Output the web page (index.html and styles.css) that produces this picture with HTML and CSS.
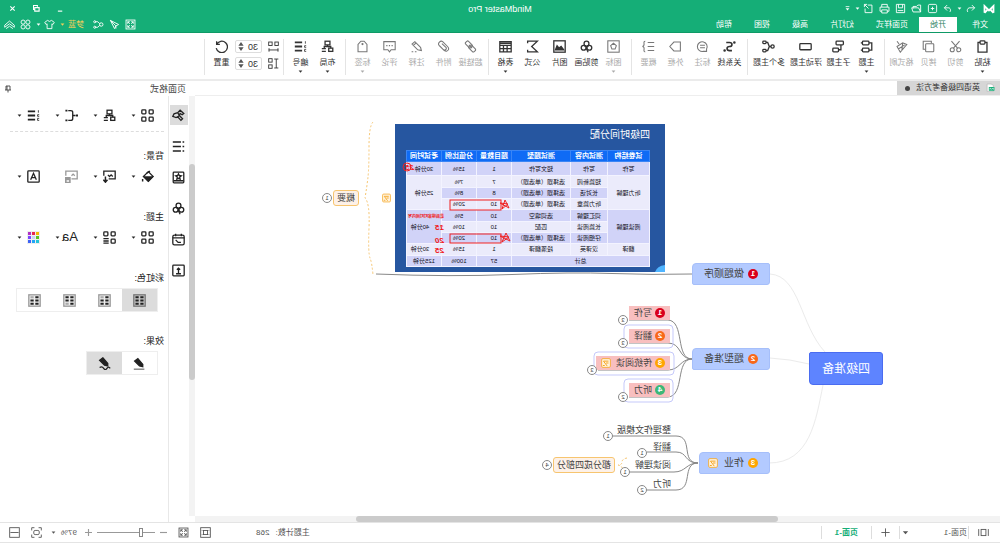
FILE: index.html
```html
<!DOCTYPE html>
<html lang="zh-CN">
<head>
<meta charset="utf-8">
<title>MindMaster Pro</title>
<link rel="stylesheet" href="styles.css">
</head>
<body>
<svg class="sprite" aria-hidden="true">
  <symbol id="i-caret" viewBox="0 0 8 8"><path d="M1 2.500h6L4 6z" fill="currentColor" stroke="none"/></symbol>
  <symbol id="i-undo" viewBox="0 0 16 16"><path d="M6 3 2 7l4 4M2 7h8a4 4 0 0 1 2 6"/></symbol>
  <symbol id="i-redo" viewBox="0 0 16 16"><path d="m10 3 4 4-4 4M14 7H7a4 4 0 0 0-1 6"/></symbol>
  <symbol id="i-new" viewBox="0 0 16 16"><rect x="2" y="2" width="12" height="12" rx="2"/><path d="M8 5.500v5M5.500 8h5"/></symbol>
  <symbol id="i-open" viewBox="0 0 16 16"><path d="M2 13V3h4l2 2h5v3M2 13h11l2-6H5z"/></symbol>
  <symbol id="i-save" viewBox="0 0 16 16"><path d="M2 2h12v12H2zM5 2v5h6V2M4 11h8"/></symbol>
  <symbol id="i-print" viewBox="0 0 16 16"><path d="M4 6V2h8v4M4 12H1.500V6h13v6H12M4 10h8v4.500H4z"/></symbol>
  <symbol id="i-export" viewBox="0 0 16 16"><path d="M9 3H3v11h10V8M8 8l6-6M10 2h4v4"/></symbol>
  <symbol id="i-full" viewBox="0 0 16 16"><rect x="1.500" y="1.500" width="13" height="13"/><path d="M4 7V4h3M9 4h3v3M12 9v3H9M7 12H4V9M4 4l3 3M12 4 9 7M12 12 9 9M4 12l3-3"/></symbol>
  <symbol id="i-send" viewBox="0 0 16 16"><path d="M14 2 2 8l4 2 2 4zM14 2 6 10v4"/></symbol>
  <symbol id="i-share" viewBox="0 0 16 16"><circle cx="4" cy="8" r="2.500"/><path d="m6 7 3-3h4M6 9l3 3h4"/><circle cx="13.500" cy="4" r="1.500"/><circle cx="13.500" cy="12" r="1.500"/></symbol>
  <symbol id="i-shirt" viewBox="0 0 16 16"><path d="M5 2 1 5l2 3 1.500-1v7h7V7L13 8l2-3-4-3q-3 3-6 0z"/></symbol>
  <symbol id="i-clover" viewBox="0 0 16 16"><circle cx="4.500" cy="4.500" r="3"/><circle cx="11.500" cy="4.500" r="3"/><circle cx="4.500" cy="11.500" r="3"/><circle cx="11.500" cy="11.500" r="3"/></symbol>
  <symbol id="i-up" viewBox="0 0 16 16"><path d="m1 9 7-6 7 6v3L8 7l-7 5zM3 14l5-3.500 5 3.500"/></symbol>
  <symbol id="i-paste" viewBox="0 0 16 16"><path d="M5 3H2.500v12h11V3H11"/><rect x="5" y="1" width="6" height="4" rx="1"/></symbol>
  <symbol id="i-cut" viewBox="0 0 16 16"><circle cx="4" cy="12" r="2.500"/><circle cx="12" cy="12" r="2.500"/><path d="M5.500 10 13 1.500M10.500 10 3 1.500"/></symbol>
  <symbol id="i-copy" viewBox="0 0 16 16"><path d="M4.500 4V1.500h10v10H12"/><rect x="1.500" y="4.500" width="10" height="10" rx="1"/></symbol>
  <symbol id="i-format" viewBox="0 0 16 16"><path d="M13.500 1.500 11 5M1.500 5.500l5-2 7 4.500-4 7zM4 6l8 5M6.500 3.500l1 9"/></symbol>
  <symbol id="i-topic" viewBox="0 0 16 16"><rect x="5" y="1.500" width="8" height="4.500" rx="1"/><rect x="5" y="10" width="8" height="4.500" rx="1"/><path d="M5 3.500H1.500v9H5M13 3.500h2M13 12.500h2"/></symbol>
  <symbol id="i-sub" viewBox="0 0 16 16"><rect x="2" y="1.500" width="9" height="4.500" rx="1"/><rect x="8" y="10" width="7" height="4.500" rx="1"/><path d="M5 6v6h3"/></symbol>
  <symbol id="i-float" viewBox="0 0 16 16"><rect x="1" y="4.500" width="14" height="7.500" rx="1"/></symbol>
  <symbol id="i-multi" viewBox="0 0 16 16"><circle cx="3" cy="8" r="2"/><path d="M5 8h2l2-5h2M7 8l2 5h2"/><rect x="11" y="1.500" width="4" height="3" rx="1"/><rect x="11" y="11.500" width="4" height="3" rx="1"/></symbol>
  <symbol id="i-relation" viewBox="0 0 16 16"><path d="M12 3H8q-3 0-3 2.500T8 8q3 0 3 2.500T8 13H5" stroke-width="2"/><circle cx="2" cy="3" r=".8"/><circle cx="14" cy="13" r=".8"/></symbol>
  <symbol id="i-callout" viewBox="0 0 16 16"><path d="M3 14v-3a6 6 0 1 1 4 3zM5 6.500h6M5 9.500h6"/></symbol>
  <symbol id="i-frame" viewBox="0 0 16 16"><path d="M2 2.500h8l5 5.500-5 5.500H2z"/></symbol>
  <symbol id="i-summary" viewBox="0 0 16 16"><path d="M1 3h8M1 8h8M1 13h8M12 1.500q2 0 1.500 3T15.500 8q-2.500 0-2 3.500t-1.500 3"/></symbol>
  <symbol id="i-mark" viewBox="0 0 16 16"><rect x="1" y="1" width="14" height="14"/><path d="m8 4 3.500 3-1.500 4H6L4.500 7z"/></symbol>
  <symbol id="i-clip" viewBox="0 0 16 16"><circle cx="8" cy="4.500" r="3"/><circle cx="4.500" cy="9.500" r="3"/><circle cx="11.500" cy="9.500" r="3"/><path d="M8 8v3l-2 4M6 7l2 2 2-2"/></symbol>
  <symbol id="i-image" viewBox="0 0 16 16"><rect x="1" y="1" width="14" height="14"/><path d="m3 12 3-4 2.500 2L11 7l2 5z" fill="currentColor"/></symbol>
  <symbol id="i-sigma" viewBox="0 0 16 16"><path d="M14 4V1.500H2L9 8l-7 6.500h12V12"/></symbol>
  <symbol id="i-table" viewBox="0 0 16 16"><path d="M1 2h14v12.500H1zM1 4h14M1 6.500h14M1 10.500h14M6 6.500v8M10.500 6.500v8"/></symbol>
  <symbol id="i-link" viewBox="0 0 16 16"><rect x="1.500" y="8" width="9" height="5" rx="1.500" transform="rotate(-45 6 10.500)"/><rect x="5.500" y="3" width="9" height="5" rx="1.500" transform="rotate(-45 10 5.500)"/><path d="m6 10 4-4"/></symbol>
  <symbol id="i-attach" viewBox="0 0 16 16"><path d="M13 7 7 13q-3 2-5-1-1-2 1-4l6-6q2-1.500 4 .5 2 2 .5 4L8 12q-2 1-3-.5T5 9l5-4.500"/></symbol>
  <symbol id="i-note" viewBox="0 0 16 16"><path d="M3 9 10 2l3.500 3-7 7-4.500 1zM8.500 3.500 12 7M8 14.500h2M12 14.500h2"/></symbol>
  <symbol id="i-comment" viewBox="0 0 16 16"><path d="M1 2h14v10h-5l-2 2.500L6 12H1z"/><path d="M4 7h1.500M7.300 7h1.500M10.500 7H12" stroke-width="1.600"/></symbol>
  <symbol id="i-tag" viewBox="0 0 16 16"><path d="M2.500 14.500v-9l3.500-4h4l3.500 4v9z"/><circle cx="8" cy="5" r=".7"/></symbol>
  <symbol id="i-layout" viewBox="0 0 16 16"><rect x="5" y="1.500" width="6" height="4.500"/><rect x="1.500" y="10" width="5" height="4"/><path d="M8 6v2M4 10V8h8v2M10 10.500h5M10 14h5"/></symbol>
  <symbol id="i-number" viewBox="0 0 16 16"><path d="M6 3h9M6 8h9M6 13h9" stroke-width="2.200"/><path d="M2 1.500v3M1 7h2v2H1M1 11.500h2V14H1" stroke-width="1"/></symbol>
  <symbol id="i-hgap" viewBox="0 0 16 16"><rect x="1" y="1.500" width="5" height="5"/><rect x="10" y="1.500" width="5" height="5"/><path d="M1 13h14M1.500 10.500v5M14.500 10.500v5"/></symbol>
  <symbol id="i-vgap" viewBox="0 0 16 16"><rect x="10" y="1" width="5" height="5"/><rect x="10" y="10" width="5" height="5"/><path d="M4 1.500v13M1 1.500h6M1 14.500h6"/></symbol>
  <symbol id="i-reset" viewBox="0 0 16 16"><path d="M14 1.500v4h-4M14 5.500a7 7 0 1 0 .5 4.500"/></symbol>
  <symbol id="i-spin" viewBox="0 0 8 14"><path d="M4 1 7.500 6h-7zM4 13 .5 8h7z" fill="currentColor" stroke="none"/></symbol>
  <symbol id="i-pin" viewBox="0 0 16 16"><path d="M4 10V2h8v8M2 10h12M8 10v5M10 2v8"/></symbol>
  <symbol id="i-brush" viewBox="0 0 16 16"><path d="M1.500 5.500 6 1.500l3 3 4.500 1.500 1.500 3-4 1.500-2-1L5 14l-2-2 4-4-1-2.500-2.500 1.500zM9 4.500 7 8l2 2"/></symbol>
  <symbol id="i-list" viewBox="0 0 16 16"><path d="M5 2.500h10M5 8h10M5 13.500h10" stroke-width="2"/><path d="M1 2.500h2M1 8h2M1 13.500h2" stroke-width="2"/></symbol>
  <symbol id="i-star" viewBox="0 0 16 16"><rect x="1.500" y="1.500" width="13" height="13" rx="1"/><path d="M2 12h12M8 3.500l1 2 2.500.5-2 1.500.5 2.500-2-1-2 1 .5-2.500-2-1.500L7 5.500z"/></symbol>
  <symbol id="i-cal" viewBox="0 0 16 16"><rect x="1" y="2.500" width="14" height="12" rx="2"/><path d="M1 6h14M4.500 1v3M11.500 1v3M5 11.500h3.500l3-3"/></symbol>
  <symbol id="i-upload" viewBox="0 0 16 16"><rect x="1" y="1.500" width="14" height="13" rx="1"/><path d="M8 11V5M6 7l2-2 2 2M5 12h6"/></symbol>
  <symbol id="i-four" viewBox="0 0 16 16"><rect x="1" y="1" width="5" height="5" rx="1"/><rect x="10" y="1" width="5" height="5" rx="1"/><rect x="1" y="10" width="5" height="5" rx="1"/><rect x="10" y="10" width="5" height="5" rx="1"/></symbol>
  <symbol id="i-style" viewBox="0 0 16 16"><rect x="1" y="1" width="5" height="5" rx="1"/><rect x="10" y="1" width="5" height="5" rx="1"/><rect x="1" y="10" width="5" height="5" rx="1"/><path d="M9 9.500h6.500M9 12.300h6.500M9 15h6.500"/></symbol>
  <symbol id="i-branch" viewBox="0 0 16 16"><path d="M3 8h3.500M12 2H9q-2.500 0-2.500 2v8q0 2 2.500 2h3"/><path d="M0 8h2.500M13 2h2.500M13 14h2.500" stroke-width="2.400"/></symbol>
  <symbol id="i-fill" viewBox="0 0 16 16"><path d="m7 2 6 6-6 6-6-6z"/><path d="M2 8.500h10L7 13.500z" fill="currentColor"/><path d="M5 1.500 9 4M14 11v3" stroke-width="1.800"/></symbol>
  <symbol id="i-bgimg" viewBox="0 0 16 16"><path d="M9 11H1V1.500h14V7M4 8l2-2 2 2 2-2"/><path d="M13 8v6M10.500 12l2.500 3 2.500-3" stroke-width="1.800"/></symbol>
  <symbol id="i-delimg" viewBox="0 0 16 16"><path d="M8 11H1V1.500h14V7M4 7l2-2 2 2"/><path d="M9 9.500h7M10 11.500h5v4h-5z" stroke-width="2"/></symbol>
  <symbol id="i-mark-a" viewBox="0 0 16 16"><rect x="1" y="1" width="14" height="14" rx="1"/><path d="m4.500 12 3.500-8 3.500 8M6 9.500h4"/></symbol>
  <symbol id="i-cells" viewBox="0 0 16 16"><rect x="1" y="1" width="14" height="14" fill="#c8c8c8" stroke="#777"/><path d="M3 4h4M9 4h4M3 8h4M9 8h4M3 12h4M9 12h4" stroke-width="2.600"/></symbol>
  <symbol id="i-cells2" viewBox="0 0 16 16"><rect x="1" y="1" width="14" height="14" fill="#eee" stroke="#999"/><path d="M3 4h4M9 8h4M3 12h4M9 12h4M3 8h4" stroke-width="2.600"/><path d="M9 4h4" stroke="#aaa" stroke-width="2.600"/></symbol>
  <symbol id="i-pen" viewBox="0 0 16 16"><path d="m4 9 6-7 4 3-6 6-4 1z" fill="currentColor"/><path d="M2 15h13" stroke="#777"/></symbol>
  <symbol id="i-pen2" viewBox="0 0 16 16"><path d="m4 8 6-7 4 3-6 6-4 1z" fill="currentColor"/><path d="M1 14q2-3 4 0t4 0 5-1"/></symbol>
  <symbol id="i-memo" viewBox="0 0 16 16"><rect x="1" y="1" width="14" height="14" rx="2" fill="#fff3df"/><path d="M4 5h8M4 8h4M12 5l-6 8M10 12h3" stroke-width="1.600"/></symbol>
  <symbol id="i-view" viewBox="0 0 16 16"><path d="M1 3v10M15 3v10"/><rect x="4.500" y="3.500" width="7" height="9"/></symbol>
  <symbol id="i-page" viewBox="0 0 16 16"><rect x="1" y="1" width="14" height="14"/><rect x="5" y="5" width="6" height="6"/><path d="M2 5h3M11 5h3M2 11h3M11 11h3" stroke-width=".6"/></symbol>
  <symbol id="i-fit" viewBox="0 0 16 16"><path d="M1 5V1h4M11 1h4v4M15 11v4h-4M5 15H1v-4"/><rect x="4" y="5" width="8" height="6" rx="2"/></symbol>
  <symbol id="i-width" viewBox="0 0 16 16"><rect x="1" y="1" width="14" height="14"/><path d="M2 8h12"/></symbol>
</svg>

<div class="app">
  <header class="titlebar">
    <div class="caption">
      <div class="quick">
        <svg class="logo" viewBox="0 0 16 12"><path d="M2 11V2l6 6 6-6v9"/><path d="m2 11 5-5M14 11l-4-4"/></svg>
        <button class="bare gap-l" aria-label="撤销"><svg class="ic s11"><use href="#i-undo"/></svg></button>
        <svg class="ic s5"><use href="#i-caret"/></svg>
        <button class="bare" aria-label="重做"><svg class="ic s11"><use href="#i-redo"/></svg></button>
        <button class="bare" aria-label="新建"><svg class="ic s11"><use href="#i-new"/></svg></button>
        <button class="bare" aria-label="打开"><svg class="ic s11"><use href="#i-open"/></svg></button>
        <button class="bare" aria-label="保存"><svg class="ic s11"><use href="#i-save"/></svg></button>
        <button class="bare" aria-label="打印"><svg class="ic s11"><use href="#i-print"/></svg></button>
        <button class="bare" aria-label="导出"><svg class="ic s11"><use href="#i-export"/></svg></button>
        <svg class="ic s5"><use href="#i-caret"/></svg>
        <svg class="ic s5 more" viewBox="0 0 8 8"><path d="M1 1h6"/><path d="M1 3.500h6L4 7z" fill="currentColor" stroke="none"/></svg>
      </div>
      <h1 class="app-name">MindMaster Pro</h1>
      <div class="win">
        <button class="bare" aria-label="最小化"><svg class="ic s7" viewBox="0 0 8 8"><path d="M2 7h5"/></svg></button>
        <button class="bare" aria-label="还原"><svg class="ic s7" viewBox="0 0 8 8"><path d="M3 2V.5h4.500V5H6M1 3h5v4H1z"/></svg></button>
        <button class="bare" aria-label="关闭"><svg class="ic s7" viewBox="0 0 8 8"><path d="m1.500 1.500 5 5M6.500 1.500l-5 5"/></svg></button>
      </div>
    </div>
    <div class="menu-row">
      <nav class="menu">
        <button>文件</button><button class="on">开始</button><button>页面样式</button><button>幻灯片</button><button>高级</button><button>视图</button><button>帮助</button>
      </nav>
      <div class="menu-tools">
        <button class="bare" aria-label="全屏"><svg class="ic s11"><use href="#i-full"/></svg></button>
        <button class="bare" aria-label="发送"><svg class="ic s11"><use href="#i-send"/></svg></button>
        <button class="bare" aria-label="分享"><svg class="ic s11"><use href="#i-share"/></svg></button>
        <button class="bare user">梦蓝 <svg class="ic s5"><use href="#i-caret"/></svg></button>
        <button class="bare skin" aria-label="皮肤"><svg class="ic s11"><use href="#i-shirt"/></svg><svg class="ic s5"><use href="#i-caret"/></svg></button>
        <button class="bare" aria-label="应用"><svg class="ic s11"><use href="#i-clover"/></svg></button>
        <button class="bare" aria-label="收起"><svg class="ic s11"><use href="#i-up"/></svg></button>
      </div>
    </div>
  </header>

  <div class="ribbon">
    <div class="group">
      <button class="tool"><svg class="ic s13"><use href="#i-paste"/></svg>粘贴<svg class="ic s5"><use href="#i-caret"/></svg></button>
      <button class="tool off"><svg class="ic s13"><use href="#i-cut"/></svg>剪切</button>
      <button class="tool off"><svg class="ic s13"><use href="#i-copy"/></svg>拷贝</button>
      <button class="tool off"><svg class="ic s13"><use href="#i-format"/></svg>格式刷</button>
    </div>
    <div class="group spaced">
      <button class="tool"><svg class="ic s13"><use href="#i-topic"/></svg>主题<svg class="ic s5"><use href="#i-caret"/></svg></button>
      <button class="tool"><svg class="ic s13"><use href="#i-sub"/></svg>子主题</button>
      <button class="tool wide"><svg class="ic s13"><use href="#i-float"/></svg>浮动主题</button>
      <button class="tool wide"><svg class="ic s13"><use href="#i-multi"/></svg>多个主题</button>
    </div>
    <div class="group">
      <button class="tool"><svg class="ic s13"><use href="#i-relation"/></svg>关系线</button>
      <button class="tool off"><svg class="ic s13"><use href="#i-callout"/></svg>标注</button>
      <button class="tool off"><svg class="ic s13"><use href="#i-frame"/></svg>外框</button>
      <button class="tool off"><svg class="ic s13"><use href="#i-summary"/></svg>概要</button>
    </div>
    <div class="group">
      <button class="tool off"><svg class="ic s13"><use href="#i-mark"/></svg>图标<svg class="ic s5"><use href="#i-caret"/></svg></button>
      <button class="tool"><svg class="ic s13"><use href="#i-clip"/></svg>剪贴画</button>
      <button class="tool"><svg class="ic s13"><use href="#i-image"/></svg>图片</button>
      <button class="tool"><svg class="ic s13"><use href="#i-sigma"/></svg>公式</button>
      <button class="tool"><svg class="ic s13"><use href="#i-table"/></svg>表格<svg class="ic s5"><use href="#i-caret"/></svg></button>
    </div>
    <div class="group">
      <button class="tool off"><svg class="ic s13"><use href="#i-link"/></svg>超链接</button>
      <button class="tool off"><svg class="ic s13"><use href="#i-attach"/></svg>附件</button>
      <button class="tool off"><svg class="ic s13"><use href="#i-note"/></svg>注释</button>
      <button class="tool off"><svg class="ic s13"><use href="#i-comment"/></svg>评论</button>
      <button class="tool off"><svg class="ic s13"><use href="#i-tag"/></svg>标签<svg class="ic s5"><use href="#i-caret"/></svg></button>
    </div>
    <div class="group">
      <button class="tool"><svg class="ic s13"><use href="#i-layout"/></svg>布局<svg class="ic s5"><use href="#i-caret"/></svg></button>
      <button class="tool"><svg class="ic s13"><use href="#i-number"/></svg>编号<svg class="ic s5"><use href="#i-caret"/></svg></button>
    </div>
    <div class="group">
      <div class="gaps">
        <label><svg class="ic s11"><use href="#i-hgap"/></svg><span class="spin"><input value="30" aria-label="水平间距"><svg class="updown"><use href="#i-spin"/></svg></span></label>
        <label><svg class="ic s11"><use href="#i-vgap"/></svg><span class="spin"><input value="30" aria-label="垂直间距"><svg class="updown"><use href="#i-spin"/></svg></span></label>
      </div>
      <button class="tool"><svg class="ic s13"><use href="#i-reset"/></svg>重置</button>
    </div>
  </div>

  <div class="work">
    <main class="doc">
      <div class="doc-tabs">
        <button class="doc-tab"><svg class="doc-ic" viewBox="0 0 16 16"><path d="M3 14V3l4-2h7v13z" fill="#fff" stroke="#aaa"/><rect x="1" y="6" width="10" height="7" rx="1" fill="#15ae77"/><path d="M3 11V8l3 2 3-2v3" fill="none" stroke="#fff"/></svg>英语四级备考方法<i class="dirty"></i></button>
      </div>
      <div class="canvas">
        <svg class="wires" width="700" height="420" viewBox="0 96 700 420">
          <g class="faint"><path d="M230 274C200 276 200 325 175 352"/><path d="M230 358Q210 359 191 364"/><path d="M231 463C190 463 184 420 177 385"/></g>
          <g class="line">
            <path d="M308 274q40 1 80-.5t100 1 136-.5"/>
            <path d="M308 359c17 0 7-38 24-39h39M308 359c14 0 10-16 24-16h39M308 359c12 0 12 11 24 11h70M308 359c17 0 7 37 24 38h39"/>
            <path d="M302 463c18 0 4-27 22-27h63M302 463c14 0 10-11 22-11h29M302 463c12 0 12 9 24 9h44M302 463c17 0 4 27 22 27h29"/>
          </g>
          <g class="halo"><rect x="327" y="325" width="49" height="23" rx="4"/><rect x="326" y="352" width="80" height="23" rx="4"/><rect x="327" y="379" width="49" height="23" rx="4"/></g>
          <g class="dots"><path d="M627 122q4 4 4 25t1 30 3 21q-5 5-4 30t-1 30-3 17"/><path d="M373 458q5 1 5 4t4 3q-4 1-4 3"/></g>
        </svg>

        <div class="node root">四级准备</div>
        <div class="node main m1"><b class="badge red">1</b>做题顺序</div>
        <div class="node main m2"><b class="badge orange">2</b>题型准备</div>
        <div class="node main m3"><b class="badge amber">3</b>作业<svg class="ic memo"><use href="#i-memo"/></svg></div>

        <div class="node sub s1"><b class="badge red">1</b>写作</div>
        <div class="node sub s2"><b class="badge orange">2</b>翻译</div>
        <div class="node sub s3"><b class="badge amber">3</b>传统阅读<svg class="ic memo"><use href="#i-memo"/></svg></div>
        <div class="node sub s4"><b class="badge green">4</b>听力</div>
        <span class="count c1">3</span><span class="count c2">3</span><span class="count c3">3</span><span class="count c4">2</span>

        <div class="node leaf l1">整理作文模版</div>
        <div class="node leaf l2">翻译</div>
        <div class="node leaf l3">阅读理解</div>
        <div class="node leaf l4">听力</div>
        <span class="count c5">1</span><span class="count c6">1</span><span class="count c7">1</span><span class="count c8">2</span>

        <div class="node summary y1">概要</div><span class="count c9">1</span>
        <div class="node summary y2">都分成四部分</div><span class="count c10">4</span>
        <svg class="ic memo pinned"><use href="#i-memo"/></svg>

        <section class="slide">
          <h2>四级时间分配</h2>
          <table>
            <colgroup><col class="w42"><col class="w37"><col class="w59"><col class="w35"><col class="w35"><col></colgroup>
            <thead><tr><th>试卷结构</th><th>测试内容</th><th>测试题型</th><th>题目数量</th><th>分值比例</th><th>考试时间</th></tr></thead>
            <tbody>
              <tr class="tall d"><td>写作</td><td>写作</td><td>短文写作</td><td>1</td><td>15%</td><td>30分钟</td></tr>
              <tr><td rowspan="3">听力理解</td><td>短篇新闻</td><td>选择题（单选题）</td><td>7</td><td>7%</td><td rowspan="3">25分钟</td></tr>
              <tr class="d"><td>长对话</td><td>选择题（单选题）</td><td>8</td><td>8%</td></tr>
              <tr><td>听力篇章</td><td>选择题（单选题）</td><td>10</td><td>20%</td></tr>
              <tr class="d"><td rowspan="3">阅读理解</td><td>词汇理解</td><td>选词填空</td><td>10</td><td>5%</td><td rowspan="3" class="inked">40分钟</td></tr>
              <tr><td>长篇阅读</td><td>匹配</td><td>10</td><td>10%</td></tr>
              <tr class="d"><td>仔细阅读</td><td>选择题（单选题）</td><td>10</td><td>20%</td></tr>
              <tr><td>翻译</td><td>汉译英</td><td>段落翻译</td><td>1</td><td>15%</td><td class="inked">30分钟</td></tr>
              <tr class="d"><td colspan="3">总计</td><td>57</td><td>100%</td><td>125分钟</td></tr>
            </tbody>
          </table>
          <svg class="ink" viewBox="0 0 270 148">
            <path class="globe" d="M0 141q8 1 10 7H0z"/>
            <rect x="164" y="76" width="51" height="10"/><rect x="164" y="110" width="51" height="9"/>
            <path d="m156 84 4-8 3 9-6-5 8-1-9 5M155 117l4-8 4 9-7-5 9-1-10 5"/>
            <text x="251" y="46">25</text><circle cx="258" cy="43" r="4"/>
            <text class="tiny" x="221" y="94">最后得审时时间内写</text>
            <text x="221" y="106">15</text><text x="221" y="119">20</text><text x="221" y="129">25</text>
          </svg>
        </section>
      </div>
      <div class="hscroll"><i></i></div>
    </main>

    <aside class="side">
      <header class="side-title">页面格式<button class="bare" aria-label="固定"><svg class="ic s7b"><use href="#i-pin"/></svg></button></header>
      <div class="side-body">
        <div class="vscroll"><i></i></div>
        <nav class="strip">
          <button class="on" aria-label="格式"><svg class="ic s13"><use href="#i-brush"/></svg></button>
          <button aria-label="大纲"><svg class="ic s13"><use href="#i-list"/></svg></button>
          <button aria-label="图标"><svg class="ic s13"><use href="#i-star"/></svg></button>
          <button aria-label="剪贴画"><svg class="ic s13"><use href="#i-clip"/></svg></button>
          <button aria-label="任务"><svg class="ic s13"><use href="#i-cal"/></svg></button>
          <button aria-label="历史"><svg class="ic s13"><use href="#i-upload"/></svg></button>
        </nav>
        <div class="panel">
          <div class="pick first">
            <button><svg class="ic s13"><use href="#i-four"/></svg><svg class="ic s5"><use href="#i-caret"/></svg></button>
            <button><svg class="ic s13"><use href="#i-layout"/></svg><svg class="ic s5"><use href="#i-caret"/></svg></button>
            <button><svg class="ic s13"><use href="#i-branch"/></svg><svg class="ic s5"><use href="#i-caret"/></svg></button>
            <button><svg class="ic s13"><use href="#i-number"/></svg><svg class="ic s5"><use href="#i-caret"/></svg></button>
          </div>
          <h3>背景:</h3>
          <div class="pick">
            <button><svg class="ic s13"><use href="#i-fill"/></svg><svg class="ic s5"><use href="#i-caret"/></svg></button>
            <button><svg class="ic s13"><use href="#i-bgimg"/></svg><svg class="ic s5"><use href="#i-caret"/></svg></button>
            <button class="dim"><svg class="ic s13"><use href="#i-delimg"/></svg></button>
            <button><svg class="ic s13"><use href="#i-mark-a"/></svg><svg class="ic s5"><use href="#i-caret"/></svg></button>
          </div>
          <h3>主题:</h3>
          <div class="pick">
            <button><svg class="ic s13"><use href="#i-four"/></svg><svg class="ic s5"><use href="#i-caret"/></svg></button>
            <button><svg class="ic s13"><use href="#i-style"/></svg><svg class="ic s5"><use href="#i-caret"/></svg></button>
            <button class="font">Aa<svg class="ic s5"><use href="#i-caret"/></svg></button>
            <button><svg class="swatch" viewBox="0 0 13 13"><path fill="#eee" d="M0 0h13v13H0z"/><path fill="#f5b800" d="M1 1h3v3H1z"/><path fill="#e8254f" d="M5 1h3v3H5z"/><path fill="#b12fc4" d="M9 1h3v3H9z"/><path fill="#58c322" d="M1 5h3v3H1z"/><path fill="#c9d4f5" d="M5 5h3v3H5z"/><path fill="#7a45ff" d="M9 5h3v3H9z"/><path fill="#25c3d8" d="M1 9h3v3H1z"/><path fill="#20a5f7" d="M5 9h3v3H5z"/><path fill="#3d63f5" d="M9 9h3v3H9z"/></svg><svg class="ic s5"><use href="#i-caret"/></svg></button>
          </div>
          <h3>彩虹色:</h3>
          <div class="seg">
            <button class="on" aria-label="彩虹一"><svg class="ic s13"><use href="#i-cells"/></svg></button><button aria-label="彩虹二"><svg class="ic s13"><use href="#i-cells2"/></svg></button><button aria-label="彩虹三"><svg class="ic s13 flip"><use href="#i-cells2"/></svg></button><button aria-label="彩虹四"><svg class="ic s13"><use href="#i-cells2"/></svg></button>
          </div>
          <h3>效果:</h3>
          <div class="seg">
            <button aria-label="直线"><svg class="ic s13"><use href="#i-pen"/></svg></button><button class="on" aria-label="手绘"><svg class="ic s13"><use href="#i-pen2"/></svg></button>
          </div>
        </div>
      </div>
    </aside>
  </div>

  <footer class="status">
    <div class="pages">
      <button class="bare view" aria-label="视图"><svg class="ic s11"><use href="#i-view"/></svg></button>
      <label class="page-pick"><select aria-label="页面"><option>页面-1</option></select><svg class="ic s7"><use href="#i-caret"/></svg></label>
      <button class="bare add" aria-label="添加页面"><svg class="ic s11" viewBox="0 0 16 16"><path d="M8 2v12M2 8h12"/></svg></button>
      <button class="bare page-on">页面-1</button>
    </div>
    <p class="total">主题计数: <span>268</span></p>
    <div class="zoom">
      <button class="bare" aria-label="页面"><svg class="ic s11"><use href="#i-page"/></svg></button>
      <button class="bare full" aria-label="全屏"><svg class="ic s11"><use href="#i-full"/></svg></button>
      <button class="bare sign" aria-label="缩小"><svg class="ic s7" viewBox="0 0 8 8"><path d="M0 4h8"/></svg></button>
      <input type="range" min="0" max="100" value="22" aria-label="缩放">
      <button class="bare sign" aria-label="放大"><svg class="ic s7" viewBox="0 0 8 8"><path d="M0 4h8M4 0v8"/></svg></button>
      <button class="bare pct">97%<svg class="ic s5"><use href="#i-caret"/></svg></button>
      <button class="bare fit" aria-label="适合"><svg class="ic s11"><use href="#i-fit"/></svg></button>
      <button class="bare" aria-label="适合宽度"><svg class="ic s11"><use href="#i-width"/></svg></button>
    </div>
  </footer>
</div>
</body>
</html>
```
FILE: styles.css
```css
* { box-sizing: border-box; }
body { margin: 0; background: #fff; font: 8px/12px "Liberation Sans", "Noto Sans CJK SC", sans-serif; color: #444; }
button, input, select { font: inherit; color: inherit; margin: 0; padding: 0; border: 0; background: none; }
h1, h2, h3, p { margin: 0; font-weight: 400; }
i { display: block; }
.sprite { display: none; }

/* The whole window is shown as its mirror image. */
.app { transform: scaleX(-1); display: flex; flex-direction: column; min-height: 100vh; background: #fff; overflow: hidden; }

.ic { display: block; flex: none; fill: none; stroke: currentColor; stroke-width: 1.3; }
.s5 { width: 5px; height: 5px; }
.s7 { width: 7px; height: 7px; }
.s7b { width: 8px; height: 8px; stroke-width: 1.8; }
.s11 { width: 11px; height: 11px; }
.s13 { width: 13px; height: 13px; stroke-width: 1.6; }
.flip { transform: scaleY(-1); }
.bare { display: flex; align-items: center; }

/* title bar */
.titlebar { background: #15ae77; color: #fff; border-bottom: 1px solid #0e9a66; }
.caption { display: grid; grid-template-columns: 1fr auto 1fr; align-items: center; height: 17px; }
.quick { display: flex; align-items: center; gap: 5px; padding-left: 5px; }
.logo { width: 12px; height: 10px; fill: none; stroke: #fff; stroke-width: 2.4; }
.gap-l { margin-left: 2px; }
.quick .s5 { margin: 0 -2px; }
.quick .more { margin: 0 0 0 2px; }
.app-name { font-size: 9px; }
.win { display: flex; justify-content: flex-end; gap: 17px; padding-right: 9px; }
.menu-row { display: flex; justify-content: space-between; height: 15px; }
.menu { display: flex; }
.menu button { padding: 0 11px; }
.menu button:first-child { padding: 0 15px 0 12px; }
.menu .on { background: #fff; color: #2f8464; }
.menu-tools { display: flex; align-items: center; gap: 5px; padding-right: 4px; }
.user { color: #f5cf5a; gap: 3px; margin-left: 4px; }
.skin { gap: 3px; }

/* ribbon */
.ribbon { display: flex; height: 48px; padding-top: 6px; border-bottom: 2px solid #ebebeb; }
.group { display: flex; height: 36px; padding: 0 3px 0 4px; border-right: 1px solid #e4e4e4; }
.spaced { gap: 1px; }
.tool { display: flex; flex-direction: column; align-items: center; width: 27px; line-height: 12px; white-space: nowrap; color: #333; }
.tool .s13 { margin: 1px 0 4px; }
.tool.wide { width: 36px; }
.tool.off { color: #aaa; }
.tool.off .s13 { color: #777; stroke-width: 1.3; }
.gaps { display: flex; flex-direction: column; gap: 4px; padding-top: 1px; }
.gaps label { display: flex; align-items: center; gap: 6px; color: #333; }
.spin { display: flex; align-items: center; height: 13px; width: 27px; padding: 0 2px 0 3px; border: 1px solid #ddd; border-radius: 2px; }
.spin input { flex: 1; min-width: 0; font-size: 9px; outline: 0; }
.updown { width: 6px; height: 11px; color: #555; }

/* work area */
.work { flex: 1; display: grid; grid-template-columns: 1fr 195px; min-height: 0; }
.doc { display: flex; flex-direction: column; min-width: 0; }
.doc-tabs { display: flex; height: 15px; border-bottom: 1px solid #eee; }
.doc-tab { display: flex; align-items: center; gap: 6px; padding: 0 8px 0 5px; background: #d6d6d6; color: #333; }
.doc-ic { width: 9px; height: 10px; }
.dirty { width: 5px; height: 5px; border-radius: 50%; background: #444; }
.canvas { position: relative; flex: 1; overflow: hidden; }
.hscroll { height: 7px; background: #f3f3f3; padding: 0 20% 0 27.6%; border-bottom: 1px solid #e4e4e4; }
.hscroll i { height: 6px; border-radius: 3px; background: #cbcbcb; }

/* mind map: positions on the free canvas */
.wires { position: absolute; left: 0; top: 0; fill: none; }
.faint { stroke: #ebebeb; }
.line { stroke: #888; }
.halo { stroke: #c5c9fa; }
.dots { stroke: #f7c56f; stroke-dasharray: 2 2; }
.node { position: absolute; display: flex; align-items: center; white-space: nowrap; color: #444; }
.root { left: 117px; top: 256px; width: 74px; height: 33px; justify-content: center; border: 1px solid #4a6cf0; border-radius: 3px 2px 4px 2px; background: #5e84ff; color: #fff; font-size: 12px; }
.main { left: 230px; width: 78px; height: 22px; padding-left: 11px; gap: 4px; border: 1px solid #a6bffa; border-radius: 2px 4px 2px 3px; background: #b3caff; font-size: 10px; }
.m1 { top: 167px; }
.m2 { top: 252px; }
.m3 { top: 356px; width: 71px; }
.badge { display: flex; align-items: center; justify-content: center; width: 10px; height: 10px; border-radius: 50%; color: #fff; font-size: 8px; line-height: 10px; }
.red { background: #d9001b; }
.orange { background: #f8681a; }
.amber { background: #ffa500; }
.green { background: #3cb878; }
.memo { width: 10px; height: 10px; color: #f5a623; }
.m3 .memo { margin-left: 2px; }
.pinned { position: absolute; left: 609px; top: 97px; width: 9px; }
.sub { left: 330px; height: 14px; padding: 0 5px; gap: 3px; background: #f8bfbf; font-size: 9px; }
.s1 { top: 210px; }
.s2 { top: 233px; }
.s3 { top: 260px; }
.s4 { top: 287px; }
.s3 .memo { margin-left: 2px; }
.leaf { left: 329px; height: 12px; }
.l1 { top: 328px; }
.l2 { top: 345px; }
.l3 { top: 363px; }
.l4 { top: 382px; }
.leaf, .summary { font-size: 9px; }
.summary { height: 16px; padding: 0 3px; border: 1px solid #f7c56f; border-radius: 3px; background: #fdf1e8; }
.y1 { left: 641px; top: 94px; }
.y2 { left: 385px; top: 361px; }
.count { position: absolute; width: 10px; height: 10px; border: 1px solid #888; border-radius: 50%; background: #fff; font-size: 6px; line-height: 8px; text-align: center; }
.c1 { left: 372px; top: 219px; }
.c2 { left: 372px; top: 242px; }
.c3 { left: 403px; top: 269px; }
.c4 { left: 372px; top: 296px; }
.c5 { left: 387px; top: 335px; }
.c6 { left: 353px; top: 352px; }
.c7 { left: 370px; top: 371px; }
.c8 { left: 353px; top: 389px; }
.c9 { left: 668px; top: 97px; }
.c10 { left: 448px; top: 364px; }

/* picture attached to the first topic */
.slide { position: absolute; left: 335px; top: 28px; width: 270px; height: 148px; padding: 3px 11px 0 15px; background: #2656a0; color: #112; }
.slide h2 { color: #fff; font-size: 10px; line-height: 16px; height: 23px; }
.slide table { width: 100%; height: 117px; table-layout: fixed; border-collapse: collapse; font-size: 6px; line-height: 10px; text-align: center; }
.w42 { width: 42px; } .w37 { width: 37px; } .w59 { width: 59px; } .w35 { width: 35px; }
.slide th, .slide td { padding: 0; height: 11px; border: 1px solid #f3f3ff; white-space: nowrap; }
.slide th { background: #0f6bf5; border-color: #3a85f5; color: #fff; font-size: 7px; }
.slide td { background: #ebebfb; }
.slide .d td { background: #d1d3f8; }
.slide .tall td { height: 14px; }
.slide td.inked { padding-left: 8px; }
.ink { position: absolute; left: 0; top: 0; width: 100%; height: 100%; fill: none; stroke: #f02020; }
.ink text { fill: #f02020; stroke: none; font-size: 8px; font-style: italic; font-weight: 700; }
.ink .tiny { font-size: 4px; font-style: normal; }
.ink .globe { fill: #4fb4ff; stroke: none; }

/* side panel */
.side { display: flex; flex-direction: column; }
.side-title { display: flex; justify-content: space-between; align-items: center; height: 15px; padding: 0 4px 0 9px; font-size: 9px; }
.side-body { flex: 1; display: flex; border-bottom: 1px solid #e4e4e4; }
.vscroll { flex: none; width: 6px; padding-top: 68px; background: #f3f3f3; margin-bottom: 6px; }
.vscroll i { height: 216px; border-radius: 3px; background: #cbcbcb; }
.strip { flex: none; width: 21px; padding: 9px 1px 0; border-right: 1px solid #e8e8e8; display: flex; flex-direction: column; gap: 11px; color: #222; }
.strip button { display: flex; align-items: center; justify-content: center; height: 20px; }
.strip .on, .seg .on { background: #dcdcdc; }
.panel { flex: 1; min-width: 0; padding: 10px 10px 0 4px; color: #222; }
.panel h3 { font-size: 9px; line-height: 14px; }
.pick { display: grid; grid-template-columns: repeat(4, 38px); height: 20px; padding-left: 10px; margin-bottom: 24px; }
.pick button { display: flex; align-items: center; gap: 5px; }
.pick.first { height: 26px; padding-bottom: 6px; margin-bottom: 17px; border-bottom: 1px dashed #ddd; }
.panel h3 + .pick { margin-top: 3px; }
.pick .dim { color: #999; }
.pick .font { font-size: 13px; gap: 2px; }
.swatch { width: 13px; height: 13px; }
.seg { display: inline-flex; margin: 3px 0 22px 6px; border: 1px solid #eee; vertical-align: top; }
.seg button { display: flex; align-items: center; justify-content: center; width: 35px; height: 22px; }

/* status bar */
.status { display: grid; grid-template-columns: 1fr auto auto; align-items: center; height: 20px; border-bottom: 1px solid #e4e4e4; color: #555; }
.pages { display: flex; align-items: center; }
.pages > * { height: 13px; }
.view { padding: 0 9px 0 11px; border-right: 1px solid #ddd; }
.page-pick { display: flex; align-items: center; gap: 28px; padding: 0 2px 0 1px; border-right: 1px solid #ddd; }
.page-pick select { appearance: none; width: 30px; }
.add { padding: 0 8px; border-right: 1px solid #ddd; }
.page-on { padding: 0 13px; border-right: 1px solid #ddd; color: #15ae77; font-weight: 700; }
.total { margin-right: 45px; }
.total span { margin-left: 4px; }
.zoom { display: flex; align-items: center; padding-right: 9px; gap: 5px; }
.full { margin: 0 6px 0 6px; }
.sign { color: #999; }
.zoom input { appearance: none; width: 58px; height: 10px; background: linear-gradient(#999, #999) center / 100% 1px no-repeat; }
.zoom input::-webkit-slider-thumb { appearance: none; width: 4px; height: 9px; border: 1px solid #888; background: #fff; }
.pct { gap: 5px; margin-left: 3px; }
.fit { margin: 0 6px 0 4px; }
```
